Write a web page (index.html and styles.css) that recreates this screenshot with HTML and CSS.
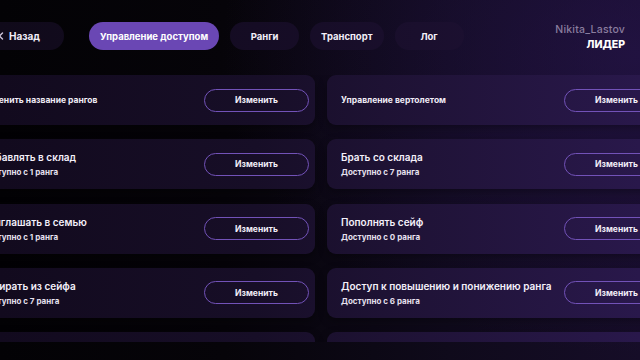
FILE: index.html
```html
<!DOCTYPE html>
<html lang="ru">
<head>
<meta charset="utf-8">
<link rel="stylesheet" href="styles.css">
</head>
<body>
<div class="page">
  <nav class="nav">
    <div class="pill back">
      <svg class="arrow" width="6" height="8" viewBox="0 0 6 8"><path d="M4.5 1 L1.5 4 L4.5 7" fill="none" stroke="#cfc6dc" stroke-width="1.4" stroke-linecap="round" stroke-linejoin="round"/></svg>
      <span>Назад</span>
    </div>
    <div class="pill active">Управление доступом</div>
    <div class="pill">Ранги</div>
    <div class="pill">Транспорт</div>
    <div class="pill">Лог</div>
    <div class="user">
      <div class="user-name">Nikita_Lastov</div>
      <div class="user-role">ЛИДЕР</div>
    </div>
  </nav>
  <div class="list">
    <div class="card">
      <div class="info"><div class="single">Изменить название рангов</div></div>
      <div class="btn">Изменить</div>
    </div>
    <div class="card">
      <div class="info"><div class="single">Управление вертолетом</div></div>
      <div class="btn">Изменить</div>
    </div>
    <div class="card">
      <div class="info"><div class="title">Добавлять в склад</div><div class="sub">Доступно с 1 ранга</div></div>
      <div class="btn">Изменить</div>
    </div>
    <div class="card">
      <div class="info"><div class="title">Брать со склада</div><div class="sub">Доступно с 7 ранга</div></div>
      <div class="btn">Изменить</div>
    </div>
    <div class="card">
      <div class="info"><div class="title">Приглашать в семью</div><div class="sub">Доступно с 1 ранга</div></div>
      <div class="btn">Изменить</div>
    </div>
    <div class="card">
      <div class="info"><div class="title">Пополнять сейф</div><div class="sub">Доступно с 0 ранга</div></div>
      <div class="btn">Изменить</div>
    </div>
    <div class="card">
      <div class="info"><div class="title">Забирать из сейфа</div><div class="sub">Доступно с 7 ранга</div></div>
      <div class="btn">Изменить</div>
    </div>
    <div class="card">
      <div class="info"><div class="title">Доступ к повышению и понижению ранга</div><div class="sub">Доступно с 6 ранга</div></div>
      <div class="btn">Изменить</div>
    </div>
    <div class="card"></div>
    <div class="card"></div>
  </div>
</div>
</body>
</html>
```

FILE: styles.css
```css
html, body {
  margin: 0;
  padding: 0;
}
body {
  width: 640px;
  height: 360px;
  overflow: hidden;
  font-family: Inter, "Noto Sans", sans-serif;
  color: #ffffff;
  background:
    radial-gradient(ellipse 420px 300px at 100% 15%, rgba(42, 22, 84, 0.55), rgba(42, 22, 84, 0) 100%),
    linear-gradient(90deg, #030205 0%, #060409 35%, #0f0a1b 70%, #160d28 100%);
}
.page {
  padding-top: 22px;
}
.nav {
  display: flex;
  align-items: center;
  gap: 11px;
  margin-left: -16px;
  padding-right: 15px;
  height: 28px;
}
.pill {
  height: 28px;
  min-width: 69px;
  box-sizing: border-box;
  padding: 0 11px;
  border-radius: 14px;
  display: flex;
  align-items: center;
  justify-content: center;
  font-size: 9.5px;
  font-weight: 700;
  color: #f2eef8;
  background: linear-gradient(90deg, #100a1a 0%, #150c24 40%, #21133a 100%) fixed;
}
.pill.back {
  width: 80px;
  justify-content: flex-start;
  padding-left: 14px;
  gap: 5px;
  margin-right: 14px;
  font-size: 10px;
}
.pill.active {
  background: #6a47b4;
  color: #ffffff;
}
.user {
  margin-left: auto;
  text-align: right;
  line-height: 15px;
  margin-top: 2px;
}
.user-name {
  font-size: 10.5px;
  font-weight: 500;
  color: #8a7d9f;
  letter-spacing: 0.2px;
}
.user-role {
  font-size: 10.5px;
  font-weight: 800;
  color: #ffffff;
}
.list {
  margin-top: 25px;
  margin-left: -33px;
  display: grid;
  grid-template-columns: 348px 348px;
  grid-auto-rows: 50px;
  column-gap: 12px;
  row-gap: 14.25px;
  height: 267px;
  overflow: hidden;
}
.card {
  display: flex;
  align-items: center;
  justify-content: space-between;
  padding: 0 6px 0 14px;
  border-radius: 9px;
  background: linear-gradient(90deg, #120a1e 0%, #170e27 40%, #1e1234 60%, #29184b 100%) fixed;
  box-shadow: 0 3px 8px rgba(0, 0, 0, 0.35);
}
.info {
  display: flex;
  flex-direction: column;
  gap: 4px;
  white-space: nowrap;
  min-width: 0;
}
.single {
  font-size: 8.5px;
  font-weight: 700;
  color: #f0ecf6;
}
.title {
  font-size: 10px;
  font-weight: 600;
  color: #f4f0fa;
}
.sub {
  font-size: 8px;
  font-weight: 700;
  color: #e6e0ee;
}
.btn {
  width: 105px;
  height: 23px;
  box-sizing: border-box;
  border: 1.5px solid #7252b8;
  border-radius: 12px;
  display: flex;
  align-items: center;
  justify-content: center;
  font-size: 8.5px;
  font-weight: 700;
  color: #f2eef8;
  flex-shrink: 0;
}
```
